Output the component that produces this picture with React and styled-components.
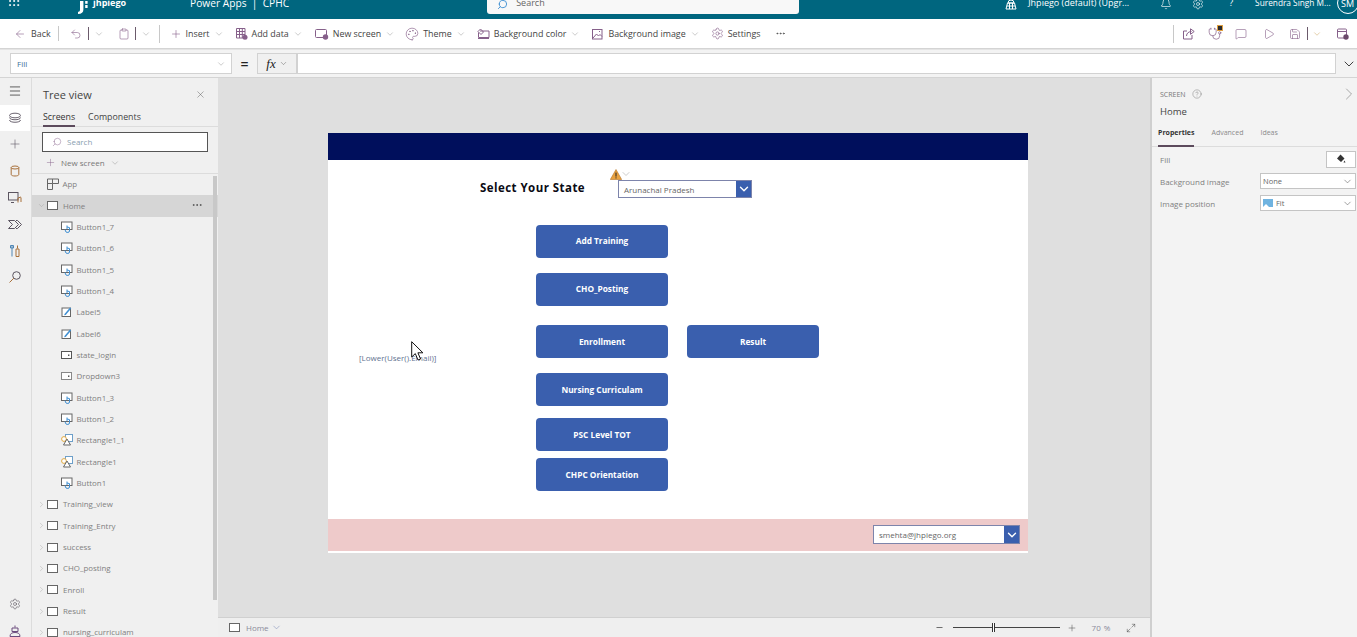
import React from "react";
import styled, { createGlobalStyle } from "styled-components";
import {
  ArrowLeft, Undo2, ChevronDown, ChevronRight, Clipboard, Plus, Palette, Settings, MoreHorizontal,
  Stethoscope, MessageSquare, Play, Save, Grip, Bell, Search, X, Menu, Minus, Maximize2, CircleHelp,
} from "lucide-react";

const Global = createGlobalStyle`
  html, body { margin: 0; padding: 0; background: #fff; }
  body { font-family: "Open Sans", "Liberation Sans", sans-serif; font-size: 9px; color: #444; }
  * { box-sizing: border-box; }
`;

const PURPLE = "#86608a";

const Page = styled.div`
  width: 1357px;
  height: 637px;
  overflow: hidden;
  display: flex;
  flex-direction: column;
`;

/* top bar, cut off by the screenshot */
const TopBar = styled.header`
  height: 19px;
  flex: none;
  overflow: hidden;
  background: #00667f;
  color: #fff;
  display: flex;
  align-items: flex-end;
  padding-bottom: 9px;
`;

const TopText = styled.span`
  font-size: ${(p) => p.$size || 9}px;
  line-height: 14px;
  margin-left: ${(p) => p.$ml || 0}px;
  font-weight: ${(p) => p.$weight || 400};
  white-space: nowrap;
`;

const TopIcon = styled.span`
  display: flex;
  flex: none;
  margin-left: ${(p) => p.$ml || 0}px;
  margin-bottom: ${(p) => p.$mb || 0}px;
`;

const SearchBox = styled.div`
  width: 312px;
  height: 28px;
  flex: none;
  margin: 0 0 -4px ${(p) => p.$ml}px;
  background: #f8f8f8;
  border-radius: 0 0 3px 3px;
  display: flex;
  align-items: flex-end;
  gap: 8px;
  padding: 0 0 4px 10px;
  color: #666;
  font-size: 9px;
  line-height: 14px;
`;

const Avatar = styled.span`
  width: 22px;
  height: 22px;
  flex: none;
  margin: 0 -2px -4px 6px;
  border: 1px solid #fff;
  border-radius: 50%;
  font-size: 9px;
  display: flex;
  align-items: center;
  justify-content: center;
`;

/* command bar */
const Toolbar = styled.div`
  height: 30px;
  flex: none;
  background: #fff;
  border-bottom: 1px solid #d4d4d4;
  display: flex;
  align-items: center;
  padding: 0 8px 0 14px;
  font-size: 8.9px;
`;

const Tool = styled.span`
  display: flex;
  align-items: center;
  gap: ${(p) => p.$gap ?? 4}px;
  margin-left: ${(p) => p.$ml || 0}px;
  white-space: nowrap;
  color: #444;
  flex: none;
`;

const Sep = styled.span`
  width: 1px;
  height: ${(p) => p.$h || 18}px;
  background: ${(p) => (p.$dark ? "#6b5a6b" : "#c8c8c8")};
  margin-left: ${(p) => p.$ml || 0}px;
  flex: none;
`;

const RightTools = styled.div`
  margin-left: auto;
  display: flex;
  align-items: center;
`;

const BadgeWrap = styled.span`
  position: relative;
  display: flex;
`;

const Badge = styled.span`
  position: absolute;
  right: 0;
  top: -2px;
  width: 4px;
  height: 4px;
  background: #2b2b2b;
  border: 1px solid #e0a040;
  box-sizing: content-box;
`;

/* formula bar */
const FormulaRow = styled.div`
  height: 29px;
  flex: none;
  background: #f3f3f3;
  border-top: 1px solid #e4e4e4;
  border-bottom: 1px solid #d4d4d4;
  display: flex;
  align-items: center;
  padding-left: 10px;
`;

const PropSelect = styled.div`
  width: 222px;
  height: 21px;
  background: #fff;
  border: 1px solid #d2d2d2;
  display: flex;
  align-items: center;
  justify-content: space-between;
  padding: 0 5px 0 6px;
  font-size: 8px;
  color: #3f6f99;
`;

const Equals = styled.span`
  width: 25px;
  text-align: center;
  font-size: 14px;
  font-weight: 600;
  color: #222;
`;

const FxButton = styled.div`
  width: 40px;
  height: 21px;
  background: #f0f0f0;
  border: 1px solid #d2d2d2;
  display: flex;
  align-items: center;
  justify-content: center;
  gap: 3px;
  font-family: "Liberation Serif", serif;
  font-style: italic;
  font-size: 13px;
  color: #222;
`;

const FormulaInput = styled.div`
  width: 1039px;
  height: 21px;
  background: #fff;
  border: 1px solid #d2d2d2;
`;

const Main = styled.div`
  flex: 1;
  min-height: 0;
  display: flex;
`;

/* icon rail */
const Rail = styled.nav`
  width: 32px;
  flex: none;
  background: #f0f0f0;
  border-right: 1px solid #dcdcdc;
  display: flex;
  flex-direction: column;
  margin-bottom: -7px;
`;

const RailItem = styled.div`
  height: 26.6px;
  display: flex;
  align-items: center;
  justify-content: center;
  width: 30px;
  background: ${(p) => (p.$active ? "#fff" : "transparent")};
  color: #5b5560;
  flex: none;
`;

const RailSpacer = styled.div`
  flex: 1;
`;

/* tree view */
const TreePanel = styled.aside`
  width: 186px;
  flex: none;
  background: #f0f0f0;
  display: flex;
  flex-direction: column;
  position: relative;
  overflow: hidden;
`;

const TreeHead = styled.div`
  height: 34px;
  flex: none;
  display: flex;
  align-items: center;
  justify-content: space-between;
  padding: 0 12px 1px 11px;
  font-size: 11px;
  color: #444;
`;

const Tabs = styled.div`
  display: flex;
  flex: none;
  gap: ${(p) => p.$gap || 13}px;
  height: ${(p) => p.$h || 15}px;
  border-bottom: 1px solid #dcdcdc;
  padding-left: ${(p) => p.$pl || 11}px;
  font-size: ${(p) => p.$size || 8.8}px;
`;

const Tab = styled.span`
  height: ${(p) => p.$h || 15}px;
  padding-top: ${(p) => p.$pt || 0}px;
  color: ${(p) => (p.$active ? "#333" : p.$muted ? "#8a8a8a" : "#444")};
  font-weight: ${(p) => (p.$bold ? 700 : 400)};
  border-bottom: ${(p) => (p.$active ? "2px solid #5c4a5c" : "none")};
  line-height: 11px;
`;

const TreeSearch = styled.div`
  margin: 5px 0 0 10px;
  width: 166px;
  height: 20px;
  flex: none;
  background: #fff;
  border: 1px solid #555;
  display: flex;
  align-items: center;
  gap: 5px;
  padding: 0 0 1px 9px;
  font-size: 8px;
  color: #8aa0b0;
`;

const NewScreen = styled.div`
  height: 22px;
  flex: none;
  display: flex;
  align-items: center;
  gap: 5px;
  padding-left: 13px;
  font-size: 8px;
  color: #777;
  border-bottom: 1px solid #dcdcdc;
`;

const TreeList = styled.div`
  flex: none;
`;

const Row = styled.div`
  height: 21.35px;
  display: flex;
  align-items: center;
  padding: 0 0 1px ${(p) => p.$pl}px;
  font-size: 7.9px;
  color: #808080;
  background: ${(p) => (p.$selected ? "#d6d6d6" : "transparent")};
  position: relative;
`;

const Caret = styled.span`
  width: 10px;
  display: flex;
  color: #999;
`;

const ScreenBox = styled.span`
  width: 11px;
  height: 9px;
  flex: none;
  background: #fff;
  border: 1px solid #666;
  margin-right: 5px;
`;

const RowIcon = styled.svg`
  width: 12px;
  height: 12px;
  flex: none;
  margin-right: 3.5px;
`;

const RowMore = styled.span`
  position: absolute;
  right: 15px;
  top: 4px;
  display: flex;
  color: #444;
`;

const TreeScroll = styled.div`
  position: absolute;
  right: 1px;
  top: 98px;
  width: 4px;
  height: 424px;
  background: #c8c8c8;
`;

/* canvas */
const Center = styled.section`
  width: 933px;
  flex: none;
  display: flex;
  flex-direction: column;
  background: #dfdfdf;
`;

const Stage = styled.div`
  flex: 1;
  padding: 55px 0 0 110px;
`;

const AppFrame = styled.div`
  width: 700px;
  height: 420px;
  background: #fff;
  position: relative;
`;

const AppHeader = styled.div`
  position: absolute;
  left: 0;
  top: 0;
  width: 100%;
  height: 27px;
  background: #000f5c;
`;

const StateTitle = styled.div`
  position: absolute;
  left: 152px;
  top: 47px;
  font-size: 11.5px;
  font-weight: 700;
  letter-spacing: 0.45px;
  color: #0a0a14;
  white-space: nowrap;
`;

const Drop = styled.div`
  position: absolute;
  left: ${(p) => p.$x}px;
  top: ${(p) => p.$y}px;
  width: ${(p) => p.$w}px;
  height: ${(p) => p.$h}px;
  background: #fff;
  border: 1px solid #7d84ab;
  display: flex;
  align-items: stretch;
  justify-content: space-between;
  font-size: ${(p) => p.$size}px;
  color: #666;
`;

const DropText = styled.span`
  align-self: center;
  padding-left: ${(p) => p.$pl}px;
`;

const DropArrow = styled.span`
  width: 15px;
  background: #3a5fae;
  color: #fff;
  display: flex;
  align-items: center;
  justify-content: center;
`;

const AppButton = styled.div`
  position: absolute;
  left: ${(p) => p.$x}px;
  top: ${(p) => p.$y}px;
  width: 132px;
  height: 33px;
  border-radius: 4px;
  background: #3a5fae;
  color: #fff;
  font-size: 8.3px;
  font-weight: 700;
  padding-bottom: ${(p) => p.$pb}px;
  display: flex;
  align-items: center;
  justify-content: center;
`;

const EmailLabel = styled.div`
  position: absolute;
  left: 31px;
  top: 219px;
  font-size: 8px;
  color: #5f7390;
  white-space: nowrap;
`;

const Footer = styled.div`
  position: absolute;
  left: 0;
  top: 386px;
  width: 100%;
  height: 32px;
  background: #eecaca;
`;

const Warn = styled.svg`
  position: absolute;
  left: 282px;
  top: 36px;
`;

const WarnChevron = styled.span`
  position: absolute;
  left: 292px;
  top: 35px;
  display: flex;
`;

const Cursor = styled.svg`
  position: absolute;
  left: 83px;
  top: 208px;
`;

const BottomBar = styled.div`
  height: 20px;
  flex: none;
  background: #efefef;
  border-top: 1px solid #d0d0d0;
  display: flex;
  align-items: center;
  padding-left: 11px;
  font-size: 8px;
  color: #777;
`;

const ZoomTrack = styled.span`
  width: 107px;
  height: 1px;
  background: #444;
  margin-left: 9px;
  position: relative;
  flex: none;
`;

const ZoomThumb = styled.span`
  position: absolute;
  left: 39px;
  top: -4px;
  width: 3px;
  height: 9px;
  background: #fff;
  border-left: 1px solid #333;
  border-right: 1px solid #333;
`;

const BarText = styled.span`
  margin-left: ${(p) => p.$ml || 0}px;
  color: #8a8a9a;
`;

/* properties */
const PropsPanel = styled.aside`
  flex: 1;
  background: #f3f3f3;
  border-left: 2px solid #cfcfcf;
  display: flex;
  flex-direction: column;
  margin-left: -1px;
`;

const PropsHead = styled.div`
  height: 22px;
  margin-top: 5px;
  padding: 0 0 0 8px;
  display: flex;
  align-items: center;
  gap: 6px;
  font-size: 7px;
  color: #777;
`;

const PropsName = styled.div`
  font-size: 9.5px;
  color: #444;
  padding-left: 8px;
  height: 21px;
  line-height: 14px;
`;

const HeadChevron = styled.span`
  margin: 0 -2px 0 auto;
  display: flex;
  color: #999;
`;

const PropRow = styled.div`
  height: 22px;
  display: flex;
  align-items: center;
  justify-content: space-between;
  padding: 0 1px 0 8px;
  font-size: 8px;
  color: #808080;
`;

const PropControl = styled.div`
  width: 96px;
  height: 16px;
  background: #fff;
  border: 1px solid #c4c4c4;
  display: flex;
  align-items: center;
  gap: 3px;
  padding: 0 2px 0 2px;
  color: #666;
  font-size: 7.5px;
`;

const FillButton = styled.div`
  width: 30px;
  height: 17px;
  background: #fff;
  border: 1px solid #c4c4c4;
  display: flex;
  align-items: center;
  justify-content: center;
`;

const PropRows = styled.div`
  padding-top: 1px;
`;

const Chev = ({ size = 10, color = "#999", ml = 0, sw = 1.2 }) => (
  <ChevronDown size={size} color={color} strokeWidth={sw} style={{ marginLeft: ml }} />
);

const tool = { size: 12, color: PURPLE, strokeWidth: 1.2 };

const Svg = ({ w = 12, h = 12, stroke = PURPLE, children }) => (
  <svg width={w} height={h} viewBox={`0 0 ${w} ${h}`} fill="none" stroke={stroke} strokeWidth="1">{children}</svg>
);

const LogoMark = () => (
  <svg width="11" height="13" viewBox="0 0 11 13" fill="#fff">
    <path d="M3 0h3.400v8.500C6.400 11.400 4.600 13 1 13v-2.200c1.500 0 2-.8 2-2.300z" />
    <rect x="8.200" y="0" width="2.400" height="2.800" />
    <rect x="8.200" y="4" width="2.400" height="3" />
  </svg>
);
const EnvIcon = () => (
  <Svg stroke="#fff">
    <path d="M3 5a3 3 0 0 1 6 0zM1 11l1.500-6h7L11 11zM1.800 8h8.400M4.500 5v6M7.500 5v6" />
  </Svg>
);
const AddDataIcon = () => (
  <Svg>
    <path d="M.5.5h8.500v9.500H.5zM.5 3.500h8.500M.5 6.500h8.500M3.500 .5v9.500M6.300 .5v9.500" />
    <circle cx="9" cy="9.300" r="2.500" fill={PURPLE} stroke="none" />
  </Svg>
);
const NewScreenIcon = () => (
  <Svg w={14}>
    <rect x=".5" y="1.500" width="11" height="8" rx="1" />
    <circle cx="10.500" cy="9" r="2.700" fill={PURPLE} stroke="none" />
  </Svg>
);
const BgColorIcon = () => (
  <Svg w={13}>
    <path d="M3 3h9v6.500H1.500V4.500M1 10.500h11" />
    <path d="M3.500 1l3 3-2.500 2.500-3-3z" />
  </Svg>
);
const BgImageIcon = () => (
  <Svg>
    <rect x=".5" y="1.500" width="9.500" height="9.500" />
    <path d="M1 10l3.500-4 2 2 1.500-1.500 2 2M7 3.500h1" />
  </Svg>
);
const ShareIcon = () => (
  <Svg>
    <path d="M4 3H.5v8h8.500V7" />
    <path d="M3.500 8c0-3 2.500-4.500 5-4.500M7.500 .8L11.200 3.500 7.500 6.300z" />
  </Svg>
);
const PublishIcon = () => (
  <Svg>
    <rect x=".5" y="1" width="9" height="9" rx="1" />
    <path d="M.5 3.500h9" />
    <circle cx="9" cy="9" r="2.700" fill="#6b4a6b" stroke="none" />
  </Svg>
);

const RailLayers = () => (
  <Svg w={14} stroke="#6b6470">
    <ellipse cx="7" cy="3.500" rx="5.500" ry="2.300" />
    <path d="M1.500 5.500c0 3 11 3 11 0M1.500 8c0 3 11 3 11 0" />
  </Svg>
);
const RailData = () => (
  <Svg stroke="#a8703a">
    <ellipse cx="6" cy="2.500" rx="3.800" ry="1.500" />
    <path d="M2.200 2.500v7c0 2 7.600 2 7.600 0v-7" />
  </Svg>
);
const RailMedia = () => (
  <Svg w={14} stroke="#5b5560">
    <rect x=".5" y=".5" width="9.500" height="7.500" />
    <path d="M3 10.500h3" />
    <path d="M10 6v4.500M13 5.500v4.500M10 6l3-1" stroke="#a8703a" />
  </Svg>
);
const RailFlows = () => (
  <Svg w={14} stroke="#5b5560">
    <path d="M.5 2.500h6l4 4-4 4h-6l4-4zM8 2.500h1.500l4 4-4 4H8" />
  </Svg>
);
const RailTools = () => (
  <Svg stroke="#a8703a">
    <path d="M3 .5v11M1.500 .5h3V3h-3z" stroke="#4f86b5" />
    <path d="M8.500 .5v3M7 4h3v7.500H7z" />
  </Svg>
);
const RailSearch = () => (
  <Svg>
    <circle cx="7.500" cy="4.500" r="3.800" stroke="#5b5560" />
    <path d="M4.800 7.200L.5 11.500" stroke="#a8703a" />
  </Svg>
);
const RailBot = () => (
  <Svg stroke="#6b4a7d">
    <path d="M6 .5v2M3 3h6v3.500H3zM1 11.500c0-3 2-4 5-4s5 1 5 4z" />
  </Svg>
);

const ButtonGlyph = () => (
  <RowIcon viewBox="0 0 12 12" fill="none">
    <rect x="0.5" y="1" width="10.500" height="7.500" fill="#fff" stroke="#666" />
    <path d="M6 4.500v3.500M6 6l2.500.6V10a1.600 1.600 0 0 1-1.600 1.400H6A1.700 1.700 0 0 1 4.500 10L4 8.500" stroke="#3f8fd2" />
  </RowIcon>
);
const LabelGlyph = () => (
  <RowIcon viewBox="0 0 12 12" fill="none">
    <rect x="1" y="2" width="8.500" height="8.500" fill="#fff" stroke="#666" />
    <path d="M3.500 8l5.500-6.500 1.200 1L4.700 9 3.300 9.200z" fill="#3f8fd2" />
  </RowIcon>
);
const InputGlyph = ({ line }) => (
  <RowIcon viewBox="0 0 12 12" fill="none">
    <rect x="0.5" y="2.500" width="10" height="7" fill="#fff" stroke={line ? "#888" : "#555"} />
    <rect x="7" y="5.500" width="1.400" height="1.400" fill="#444" />
  </RowIcon>
);
const RectGlyph = () => (
  <RowIcon viewBox="0 0 12 12" fill="none">
    <rect x="4.500" y="0.500" width="7" height="7" stroke="#6d9fc9" fill="#fff" />
    <circle cx="3" cy="5" r="2.400" stroke="#e2a93f" fill="#fff" />
    <path d="M6 5l3.500 6h-7z" stroke="#666" fill="#fff" />
  </RowIcon>
);
const AppGlyph = () => (
  <RowIcon viewBox="0 0 12 12" fill="none" stroke="#666">
    <path d="M.5 1h11v4.500h-6v6h-5zM.5 5.500h5M5.500 1v4.500" />
  </RowIcon>
);

const children = [
  ["Button1_7", ButtonGlyph], ["Button1_6", ButtonGlyph], ["Button1_5", ButtonGlyph], ["Button1_4", ButtonGlyph],
  ["Label5", LabelGlyph], ["Label6", LabelGlyph], ["state_login", InputGlyph], ["Dropdown3", InputGlyph],
  ["Button1_3", ButtonGlyph], ["Button1_2", ButtonGlyph], ["Rectangle1_1", RectGlyph], ["Rectangle1", RectGlyph],
  ["Button1", ButtonGlyph],
];
const screens = ["Training_view", "Training_Entry", "success", "CHO_posting", "Enroll", "Result", "nursing_curriculam"];
const buttons = [
  ["Add Training", 208, 92, 2], ["CHO_Posting", 208, 140, 2], ["Enrollment", 208, 192, 0], ["Result", 359, 192, 0],
  ["Nursing Curriculam", 208, 240, 0], ["PSC Level TOT", 208, 285, 0], ["CHPC Orientation", 208, 325, 0],
];

export default function App() {
  return (
    <Page>
      <Global />
      <TopBar>
        <TopIcon $ml={7} $mb={2}><Grip size={14} strokeWidth={1.6} /></TopIcon>
        <TopIcon $ml={56} $mb={-4}><LogoMark /></TopIcon>
        <TopText $ml={5} $size={9} $weight={700}>jhpiego</TopText>
        <TopText $ml={64} $size={10.2}>Power Apps&nbsp; | &nbsp;CPHC</TopText>
        <SearchBox $ml={198}>
          <Search size={11} color="#3f8fd2" style={{ transform: "scaleX(-1)" }} />
          Search
        </SearchBox>
        <TopIcon $ml={206}><EnvIcon /></TopIcon>
        <TopText $ml={11}>Jhpiego (default) (Upgr...</TopText>
        <TopIcon $ml={31}><Bell size={12} strokeWidth={1.3} /></TopIcon>
        <TopIcon $ml={20}><Settings size={12} strokeWidth={1.3} /></TopIcon>
        <TopText $ml={25}>?</TopText>
        <TopText $ml={22} $size={8.3}>Surendra Singh M...</TopText>
        <Avatar>SM</Avatar>
      </TopBar>

      <Toolbar>
        <Tool $gap={5}><ArrowLeft {...tool} />Back</Tool>
        <Sep $ml={7} $h={15} />
        <Tool $ml={11}><Undo2 {...tool} /></Tool>
        <Sep $ml={6} $h={13} $dark />
        <Tool $ml={5}><Chev /></Tool>
        <Tool $ml={14}><Clipboard {...tool} /></Tool>
        <Sep $ml={5} $h={13} $dark />
        <Tool $ml={5}><Chev /></Tool>
        <Sep $ml={8} />
        <Tool $ml={10}><Plus {...tool} />Insert<Chev /></Tool>
        <Tool $ml={12}><AddDataIcon />Add data<Chev /></Tool>
        <Tool $ml={12}><NewScreenIcon />New screen<Chev /></Tool>
        <Tool $ml={10}><Palette size={14} color={PURPLE} strokeWidth={1.1} />Theme<Chev /></Tool>
        <Tool $ml={11}><BgColorIcon />Background color<Chev /></Tool>
        <Tool $ml={12}><BgImageIcon />Background image<Chev /></Tool>
        <Tool $ml={11}><Settings size={13} color={PURPLE} strokeWidth={1.2} />Settings</Tool>
        <Tool $ml={14}><MoreHorizontal size={11} color="#555" /></Tool>
        <RightTools>
          <Sep />
          <Tool $ml={9}><ShareIcon /></Tool>
          <Tool $ml={13}>
            <BadgeWrap>
              <Stethoscope size={14} color={PURPLE} strokeWidth={1.2} style={{ marginRight: 1 }} />
              <Badge />
            </BadgeWrap>
          </Tool>
          <Tool $ml={12}><MessageSquare {...tool} /></Tool>
          <Tool $ml={16}><Play {...tool} /></Tool>
          <Tool $ml={14}><Save {...tool} /></Tool>
          <Sep $ml={6} $h={13} $dark />
          <Tool $ml={4}><Chev color="#c9a15a" /></Tool>
          <Tool $ml={15}><PublishIcon /></Tool>
        </RightTools>
      </Toolbar>

      <FormulaRow>
        <PropSelect>Fill<Chev /></PropSelect>
        <Equals>=</Equals>
        <FxButton>fx<Chev size={9} color="#555" /></FxButton>
        <FormulaInput />
        <Tool $ml={5}><Chev size={16} color="#333" sw={1.4} /></Tool>
      </FormulaRow>

      <Main>
        <Rail>
          <RailItem><Menu size={14} strokeWidth={1.2} color="#222" /></RailItem>
          <RailItem $active><RailLayers /></RailItem>
          <RailItem><Plus size={14} strokeWidth={1} /></RailItem>
          <RailItem><RailData /></RailItem>
          <RailItem><RailMedia /></RailItem>
          <RailItem><RailFlows /></RailItem>
          <RailItem><RailTools /></RailItem>
          <RailItem><RailSearch /></RailItem>
          <RailSpacer />
          <RailItem><Settings size={12} strokeWidth={1.2} /></RailItem>
          <RailItem><RailBot /></RailItem>
        </Rail>

        <TreePanel>
          <TreeHead>Tree view<X size={11} strokeWidth={1} color="#555" /></TreeHead>
          <Tabs>
            <Tab $active>Screens</Tab>
            <Tab>Components</Tab>
          </Tabs>
          <TreeSearch>
            <Search size={10} strokeWidth={1.1} color={PURPLE} style={{ transform: "scaleX(-1)" }} />
            Search
          </TreeSearch>
          <NewScreen><Plus size={11} strokeWidth={1} color={PURPLE} />New screen<Chev size={10} /></NewScreen>
          <TreeList>
            <Row $pl={15}><AppGlyph />App</Row>
            <Row $pl={5} $selected>
              <Caret><ChevronDown size={9} strokeWidth={1} /></Caret>
              <ScreenBox />Home
              <RowMore><MoreHorizontal size={12} strokeWidth={1.5} /></RowMore>
            </Row>
            {children.map(([name, Glyph]) => (
              <Row key={name} $pl={29}><Glyph line={name === "Dropdown3"} />{name}</Row>
            ))}
            {screens.map((name) => (
              <Row key={name} $pl={5}>
                <Caret><ChevronRight size={9} strokeWidth={1} /></Caret>
                <ScreenBox />{name}
              </Row>
            ))}
          </TreeList>
          <TreeScroll />
        </TreePanel>

        <Center>
          <Stage>
            <AppFrame>
              <AppHeader />
              <StateTitle>Select Your State</StateTitle>
              <Warn width="12" height="11" viewBox="0 0 12 11">
                <path d="M6 .5L11.700 10.500H.3z" fill="#e8a13f" stroke="#b5762a" strokeWidth=".6" />
                <path d="M6 3.600v4M6 8.400v1" stroke="#222" />
              </Warn>
              <WarnChevron><Chev size={12} sw={1} /></WarnChevron>
              <Drop $x={290} $y={47} $w={134} $h={18} $size={8}>
                <DropText $pl={5}>Arunachal Pradesh</DropText>
                <DropArrow><ChevronDown size={14} strokeWidth={2.4} /></DropArrow>
              </Drop>
              {buttons.map(([label, x, y, pb]) => (
                <AppButton key={label} $x={x} $y={y} $pb={pb}>{label}</AppButton>
              ))}
              <EmailLabel>[Lower(User().Email)]</EmailLabel>
              <Cursor width="14" height="21" viewBox="0 0 14 21">
                <path d="M.7.7V16l3.600-3.400L7 19l2.600-1-2.700-6.200h5z" fill="#fff" stroke="#111" />
              </Cursor>
              <Footer>
                <Drop $x={545} $y={6} $w={147} $h={19} $size={8}>
                  <DropText $pl={5}>smehta@jhpiego.org</DropText>
                  <DropArrow><ChevronDown size={14} strokeWidth={2.4} /></DropArrow>
                </Drop>
              </Footer>
            </AppFrame>
          </Stage>
          <BottomBar>
            <ScreenBox />
            <BarText $ml={1}>Home</BarText>
            <Tool $ml={2}><Chev size={11} color="#7a8ab5" /></Tool>
            <Tool $ml={653}><Minus size={9} color="#444" /></Tool>
            <ZoomTrack><ZoomThumb /></ZoomTrack>
            <Tool $ml={7}><Plus size={10} color="#444" strokeWidth={1.2} /></Tool>
            <BarText $ml={15}>70</BarText>
            <BarText $ml={3}>%</BarText>
            <Tool $ml={16}><Maximize2 size={10} color="#444" strokeWidth={1.2} /></Tool>
          </BottomBar>
        </Center>

        <PropsPanel>
          <PropsHead>
            SCREEN <CircleHelp size={10} strokeWidth={1} color="#666" />
            <HeadChevron><ChevronRight size={20} strokeWidth={1} /></HeadChevron>
          </PropsHead>
          <PropsName>Home</PropsName>
          <Tabs $gap={17} $pl={6} $size={7} $h={21}>
            <Tab $active $bold $h={21} $pt={1}>Properties</Tab>
            <Tab $muted $pt={1}>Advanced</Tab>
            <Tab $muted $pt={1}>Ideas</Tab>
          </Tabs>
          <PropRows>
            <PropRow>Fill<FillButton>
              <svg width="10" height="10" viewBox="0 0 10 10" fill="#333"><path d="M4.500.5L8.500 4.500 5 8 1 4.500zM8.500 6.500l1 2h-2z" /></svg>
            </FillButton></PropRow>
            <PropRow>Background image<PropControl>None<Chev size={11} color="#555" ml="auto" /></PropControl></PropRow>
            <PropRow>Image position<PropControl>
              <svg width="10" height="8" viewBox="0 0 10 8"><rect width="10" height="8" fill="#6fb3e0" /><path d="M0 8l3-3 3 3z" fill="#fff" /></svg>
              Fit<Chev size={11} color="#555" ml="auto" />
            </PropControl></PropRow>
          </PropRows>
        </PropsPanel>
      </Main>
    </Page>
  );
}
